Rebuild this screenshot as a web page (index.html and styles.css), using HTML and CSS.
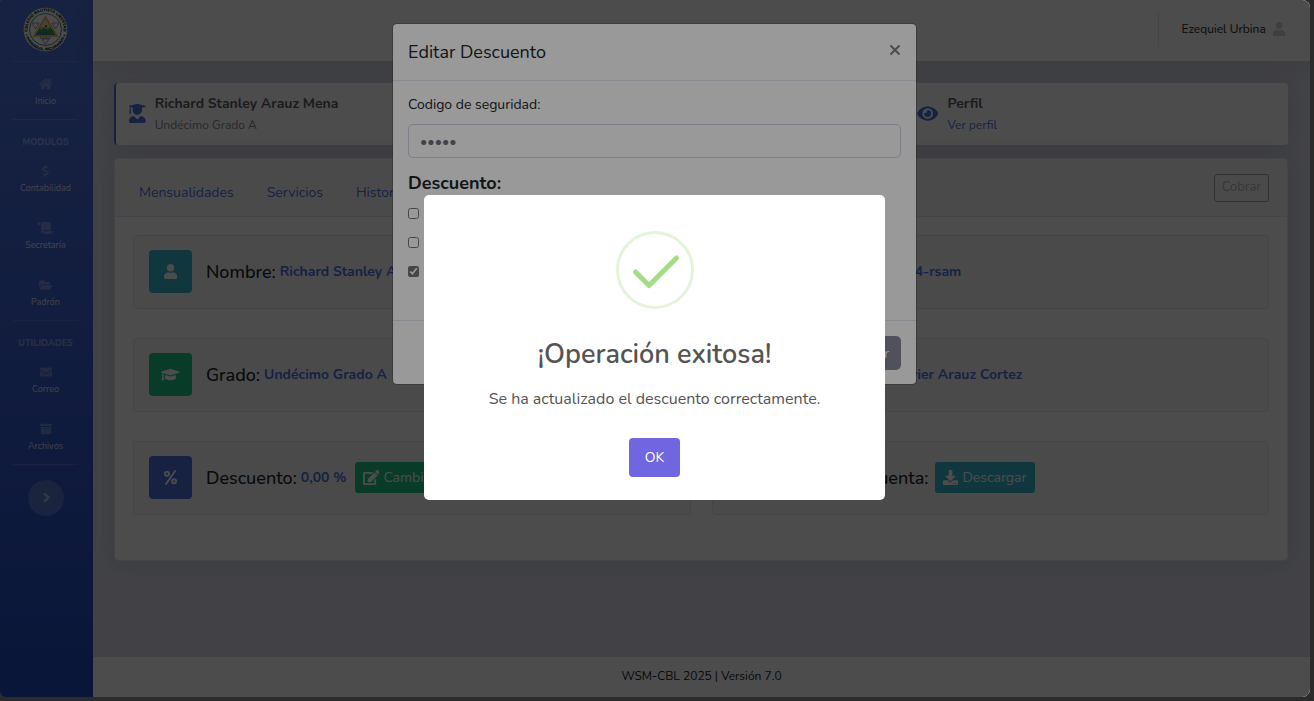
FILE: index.html
```html
<!DOCTYPE html>
<html lang="es">
<head>
<meta charset="utf-8">
<meta name="viewport" content="width=device-width, initial-scale=1">
<title>WSM-CBL</title>
<link rel="stylesheet" href="styles.css">
</head>
<body>
<div class="frame">
  <div class="app">
    <nav class="sidebar" aria-label="Principal">
      <a class="brand" href="#" aria-label="Colegio">
        <svg class="logo" viewBox="0 0 90 90">
          <defs>
            <path id="arc-top" d="M10 53 A36 36 0 1 1 80 53"/>
            <path id="arc-bottom" d="M4 46 A41 41 0 0 0 86 46"/>
            <clipPath id="tri"><path d="M45 22L66 57H24Z"/></clipPath>
          </defs>
          <circle cx="45" cy="45" r="44" fill="#fff" stroke="#3d8a7c" stroke-width="1"/>
          <circle cx="45" cy="45" r="32" fill="#fff" stroke="#3d8a7c" stroke-width="2"/>
          <text class="logo-text"><textPath href="#arc-top" startOffset="50%" text-anchor="middle">COLEGIO BAUTISTA LIBERTAD</textPath></text>
          <text class="logo-text"><textPath href="#arc-bottom" startOffset="50%" text-anchor="middle">• MANAGUA, NICARAGUA •</textPath></text>
          <path d="M18 32h14l-7 12zM58 32h14l-7 12zM38 64h14l-7 11z" fill="#fff" stroke="#444" stroke-width="1"/>
          <path d="M34 62h22" stroke="#444" stroke-width="2" stroke-dasharray="2 1"/>
          <g clip-path="url(#tri)">
            <rect x="20" y="18" width="50" height="42" fill="#79bfe0"/>
            <path d="M45 24l10 16H35z" fill="#f2e3a0"/>
            <path d="M22 50l10-7 5 3 6-5 6 5 6-4 12 9v8H22z" fill="#3f9a3a"/>
            <path d="M22 53q11-4 23 0t23 0v6H22z" fill="#2f78c4"/>
            <path d="M44 36h4v4h-4z" fill="#c33"/>
          </g>
          <path d="M45 20L68 58H22Z" fill="none" stroke="#e3b53c" stroke-width="3"/>
        </svg>
      </a>
      <hr>
      <a class="nav-item" href="#"><svg viewBox="0 0 576 512"><path d="M280.37 148.26L96 300.11V464a16 16 0 0 0 16 16l112.060-.29a16 16 0 0 0 15.920-16V368a16 16 0 0 1 16-16h64a16 16 0 0 1 16 16v95.640a16 16 0 0 0 16 16.050L464 480a16 16 0 0 0 16-16V300L295.670 148.260a12.190 12.190 0 0 0-15.300 0zM571.600 251.470L488 182.560V44.050a12 12 0 0 0-12-12h-56a12 12 0 0 0-12 12v72.610L318.470 43a48 48 0 0 0-61 0L4.340 251.470a12 12 0 0 0-1.600 16.900l25.500 31A12 12 0 0 0 45.150 301l235.220-193.740a12.190 12.190 0 0 1 15.300 0L530.900 301a12 12 0 0 0 16.900-1.600l25.500-31a12 12 0 0 0-1.700-16.930z"/></svg><span>Inicio</span></a>
      <hr>
      <div class="nav-heading">MODULOS</div>
      <a class="nav-item" href="#"><svg viewBox="0 0 288 512"><path d="M209.200 233.400l-108-31.600C88.700 198.200 80 186.500 80 173.500c0-16.300 13.200-29.500 29.500-29.500h66.300c12.200 0 24.200 3.700 34.200 10.500 6.100 4.100 14.300 3.100 19.500-2l34.800-34c7.100-6.900 6.100-18.400-1.800-24.500C238 74.800 207.400 64.100 176 64V16c0-8.800-7.200-16-16-16h-32c-8.800 0-16 7.200-16 16v48h-2.500C45.800 64-5.400 118.700.5 183.600c4.200 46.100 39.400 83.600 83.800 96.600l102.500 30c12.500 3.700 21.200 15.300 21.200 28.300 0 16.300-13.200 29.500-29.500 29.500h-66.300C100 368 88 364.300 78 357.500c-6.100-4.100-14.300-3.100-19.500 2l-34.800 34c-7.100 6.900-6.100 18.400 1.800 24.500 24.500 19.200 55.100 29.900 86.500 30v48c0 8.800 7.200 16 16 16h32c8.800 0 16-7.200 16-16v-48.200c46.600-.9 90.300-28.600 105.700-72.700 21.500-61.600-14.600-124.800-72.500-141.700z"/></svg><span>Contabilidad</span></a>
      <a class="nav-item" href="#"><svg viewBox="0 0 640 512"><path d="M48 0C21.530 0 0 21.530 0 48v64c0 8.840 7.160 16 16 16h80V48C96 21.530 74.470 0 48 0zm208 412.570V352h288V96c0-52.940-43.060-96-96-96H111.590C121.740 13.410 128 29.920 128 48v368c0 38.870 34.650 69.650 74.750 63.120C234.220 474 256 444.460 256 412.570zM288 384v32c0 52.930-43.060 96-96 96h336c61.860 0 112-50.140 112-112 0-8.840-7.160-16-16-16H288z"/></svg><span>Secretaría</span></a>
      <a class="nav-item" href="#"><svg viewBox="0 0 576 512"><path d="M572.694 292.093L500.270 416.248A63.997 63.997 0 0 1 444.989 448H45.025c-18.523 0-30.064-20.093-20.731-36.093l72.424-124.155A64 64 0 0 1 152 256h399.964c18.523 0 30.064 20.093 20.730 36.093zM152 224h328v-48c0-26.510-21.490-48-48-48H272l-64-64H48C21.490 64 0 85.490 0 112v278.046l69.077-118.418C86.214 242.250 117.989 224 152 224z"/></svg><span>Padrón</span></a>
      <hr>
      <div class="nav-heading">UTILIDADES</div>
      <a class="nav-item" href="#"><svg viewBox="0 0 512 512"><path d="M502.300 190.800c3.900-3.100 9.700-.2 9.700 4.700V400c0 26.500-21.500 48-48 48H48c-26.500 0-48-21.500-48-48V195.600c0-5 5.700-7.800 9.700-4.700 22.400 17.400 52.100 39.500 154.100 113.600 21.100 15.400 56.700 47.800 92.200 47.600 35.700.3 72-32.800 92.300-47.600 102-74.100 131.600-96.300 154-113.700zM256 320c23.200.4 56.600-29.200 73.400-41.400 132.700-96.300 142.800-104.700 173.400-128.700 5.800-4.500 9.200-11.500 9.200-18.900v-19c0-26.500-21.500-48-48-48H48c-26.500 0-48 21.500-48 48v19c0 7.400 3.400 14.300 9.200 18.900 30.600 23.900 40.700 32.400 173.400 128.700 16.800 12.200 50.200 41.800 73.400 41.400z"/></svg><span>Correo</span></a>
      <a class="nav-item" href="#"><svg viewBox="0 0 512 512"><path d="M32 448c0 17.700 14.300 32 32 32h384c17.700 0 32-14.300 32-32V160H32v288zm160-212c0-6.600 5.400-12 12-12h104c6.600 0 12 5.400 12 12v8c0 6.600-5.400 12-12 12H204c-6.600 0-12-5.400-12-12v-8zM480 32H32C14.300 32 0 46.300 0 64v48c0 8.800 7.200 16 16 16h480c8.800 0 16-7.200 16-16V64c0-17.700-14.300-32-32-32z"/></svg><span>Archivos</span></a>
      <hr>
      <button class="toggle" type="button" aria-label="Expandir menú"><svg viewBox="0 0 256 512"><path d="M224.300 273l-136 136c-9.400 9.400-24.600 9.400-33.900 0l-22.600-22.600c-9.400-9.400-9.400-24.600 0-33.900l96.400-96.400-96.400-96.400c-9.400-9.400-9.400-24.600 0-33.900L54.300 103c9.400-9.400 24.600-9.400 33.900 0l136 136c9.500 9.400 9.500 24.600.1 34z"/></svg></button>
    </nav>

    <div class="content">
      <header class="topbar">
        <a class="user" href="#"><span>Ezequiel Urbina</span>
          <svg viewBox="0 0 448 512"><path d="M224 256c70.700 0 128-57.300 128-128S294.700 0 224 0 96 57.300 96 128s57.300 128 128 128zm89.600 32h-16.700c-22.200 10.200-46.900 16-72.900 16s-50.600-5.800-72.900-16h-16.700C60.200 288 0 348.200 0 422.400V464c0 26.500 21.500 48 48 48h352c26.500 0 48-21.500 48-48v-41.600c0-74.200-60.200-134.400-134.400-134.400z"/></svg></a>
      </header>

      <main class="main">
        <section class="student">
          <div class="student-part">
            <svg viewBox="0 0 448 512"><path d="M319.400 320.600L224 416l-95.400-95.400C57.100 323.700 0 382.200 0 454.400v9.600c0 26.500 21.500 48 48 48h352c26.500 0 48-21.500 48-48v-9.600c0-72.200-57.100-130.700-128.600-133.800zM13.600 79.800l6.400 1.500v58.400c-7 4.200-12 11.500-12 20.300 0 8.400 4.600 15.400 11.100 19.700L3.500 242c-1.700 6.900 2.100 14 7.600 14h41.800c5.500 0 9.300-7.100 7.600-14l-15.600-62.300C51.400 175.400 56 168.400 56 160c0-8.800-5-16.100-12-20.300V87.100l66 15.900c-8.600 17.200-14 36.400-14 57 0 70.700 57.300 128 128 128s128-57.300 128-128c0-20.600-5.300-39.800-14-57l96.300-23.200c18.200-4.400 18.200-27.100 0-31.500l-190.400-46c-13-3.100-26.700-3.100-39.700 0L13.600 48.200c-18.100 4.400-18.100 27.200 0 31.600z"/></svg>
            <div><h2>Richard Stanley Arauz Mena</h2><p>Undécimo Grado A</p></div>
          </div>
          <div class="student-part">
            <svg viewBox="0 0 576 512"><path d="M572.520 241.400C518.290 135.590 410.930 64 288 64S57.680 135.640 3.480 241.410a32.350 32.350 0 0 0 0 29.190C57.710 376.410 165.070 448 288 448s230.320-71.640 284.520-177.410a32.350 32.350 0 0 0 0-29.190zM288 400a144 144 0 1 1 144-144 143.930 143.930 0 0 1-144 144zm0-240a95.310 95.310 0 0 0-25.310 3.790 47.850 47.850 0 0 1-66.900 66.900A95.780 95.780 0 1 0 288 160z"/></svg>
            <div><h2>Perfil</h2><p><a href="#">Ver perfil</a></p></div>
          </div>
        </section>

        <section class="card">
          <div class="card-head">
            <div class="tabs"><a href="#">Mensualidades</a><a href="#">Servicios</a><a href="#">Historial</a></div>
            <button class="cobrar" type="button" disabled>Cobrar</button>
          </div>
          <div class="tiles">
            <div class="tile">
              <span class="badge info"><svg viewBox="0 0 448 512"><path d="M224 256c70.700 0 128-57.300 128-128S294.700 0 224 0 96 57.300 96 128s57.300 128 128 128zm89.600 32h-16.700c-22.200 10.200-46.900 16-72.900 16s-50.600-5.800-72.900-16h-16.700C60.200 288 0 348.200 0 422.400V464c0 26.500 21.500 48 48 48h352c26.500 0 48-21.500 48-48v-41.600c0-74.200-60.200-134.400-134.400-134.400z"/></svg></span>
              <span class="label">Nombre:</span><b>Richard Stanley Arauz Mena</b>
            </div>
            <div class="tile">
              <span class="badge info"></span>
              <span class="label">Código:</span><b>2022-0064-rsam</b>
            </div>
            <div class="tile">
              <span class="badge success"><svg viewBox="0 0 640 512"><path d="M622.340 153.200L343.400 67.500c-15.200-4.670-31.600-4.670-46.790 0L17.660 153.200c-23.540 7.230-23.540 38.360 0 45.590l48.630 14.940c-10.670 13.190-17.230 29.280-17.880 46.900C38.780 266.150 32 276.110 32 288c0 10.780 5.680 19.850 13.860 25.650L20.330 428.530C18.110 438.520 25.710 448 35.940 448h56.110c10.240 0 17.840-9.480 15.620-19.470L82.140 313.650C90.320 307.850 96 298.780 96 288c0-11.570-6.470-21.250-15.660-26.870.76-15.020 8.440-28.300 20.690-36.720L296.600 284.500c9.060 2.780 26.440 6.250 46.790 0l278.950-85.700c23.550-7.240 23.550-38.360 0-45.600zM352.790 315.090c-28.530 8.760-52.840 3.920-65.590 0l-145.020-44.550L128 384c0 35.350 85.960 64 192 64s192-28.650 192-64l-14.180-113.470-145.030 44.560z"/></svg></span>
              <span class="label">Grado:</span><b>Undécimo Grado A</b>
            </div>
            <div class="tile">
              <span class="badge success"></span>
              <span class="label">Tutor:</span><b>Santiago Javier Arauz Cortez</b>
            </div>
            <div class="tile">
              <span class="badge primary"><svg viewBox="0 0 14 16"><g fill="none" stroke="#fff" stroke-width="2"><circle cx="3.200" cy="4" r="2.200"/><circle cx="10.800" cy="12" r="2.200"/><path d="M11.800 1L2.200 15" stroke-linecap="round"/></g></svg></span>
              <span class="label">Descuento:</span><b>0,00 %</b>
              <button class="btn success" type="button"><svg viewBox="0 0 576 512"><path d="M402.600 83.200l90.200 90.200c3.800 3.800 3.800 10 0 13.800L274.400 405.600l-92.800 10.300c-12.400 1.400-22.900-9.100-21.500-21.500l10.300-92.800L388.800 83.200c3.800-3.800 10-3.800 13.800 0zm162-22.900l-48.800-48.800c-15.200-15.200-39.900-15.200-55.200 0l-35.400 35.400c-3.800 3.800-3.800 10 0 13.800l90.200 90.200c3.800 3.800 10 3.800 13.800 0l35.400-35.400c15.200-15.300 15.200-40 0-55.200zM384 346.200V448H64V128h229.800c3.200 0 6.200-1.300 8.500-3.500l40-40c7.600-7.600 2.200-20.500-8.500-20.500H48C21.500 64 0 85.500 0 112v352c0 26.500 21.500 48 48 48h352c26.500 0 48-21.500 48-48V306.200c0-10.700-12.900-16-20.500-8.500l-40 40c-2.200 2.300-3.500 5.300-3.500 8.500z"/></svg>Cambiar</button>
            </div>
            <div class="tile">
              <span class="badge primary"></span>
              <span class="label">Estado de cuenta:</span>
              <button class="btn info" type="button"><svg viewBox="0 0 512 512"><path d="M216 0h80c13.300 0 24 10.700 24 24v168h87.700c17.800 0 26.700 21.500 14.100 34.100L269.700 378.300c-7.500 7.500-19.800 7.500-27.300 0L90.100 226.100c-12.600-12.600-3.700-34.100 14.100-34.100H192V24c0-13.300 10.700-24 24-24zm296 376v112c0 13.300-10.700 24-24 24H24c-13.300 0-24-10.700-24-24V376c0-13.300 10.700-24 24-24h146.700l49 49c20.100 20.100 52.500 20.100 72.600 0l49-49H488c13.300 0 24 10.700 24 24zm-124 88c0-11-9-20-20-20s-20 9-20 20 9 20 20 20 20-9 20-20zm64 0c0-11-9-20-20-20s-20 9-20 20 9 20 20 20 20-9 20-20z"/></svg>Descargar</button>
            </div>
          </div>
        </section>
      </main>
      <footer class="footer">WSM-CBL 2025 | Versión 7.0</footer>
    </div>
  </div>

  <div class="overlay modal-layer">
    <form class="modal" role="dialog" aria-labelledby="modal-title">
      <div class="modal-head"><h1 id="modal-title">Editar Descuento</h1><button class="close" type="button" aria-label="Cerrar"><svg viewBox="0 0 12 12"><path d="M1.500 1.500l9 9M10.500 1.500l-9 9"/></svg></button></div>
      <div class="modal-body">
        <label class="field-label" for="code">Codigo de seguridad:</label>
        <input class="field" id="code" type="password" value="12345">
        <h3>Descuento:</h3>
        <label class="check"><input type="checkbox">Media beca</label>
        <label class="check"><input type="checkbox">Beca completa</label>
        <label class="check"><input type="checkbox" checked>Sin descuento</label>
      </div>
      <div class="modal-foot"><button class="cancel" type="button">Cerrar</button></div>
    </form>
  </div>

  <div class="overlay alert-layer">
    <div class="alert" role="alertdialog" aria-labelledby="alert-title" aria-describedby="alert-text">
      <svg class="ok-icon" viewBox="0 0 78 78"><circle cx="39" cy="39" r="37.500"/><path d="M19.500 41L33 54.500L60.500 27"/></svg>
      <h2 id="alert-title">¡Operación exitosa!</h2>
      <p id="alert-text">Se ha actualizado el descuento correctamente.</p>
      <button type="button">OK</button>
    </div>
  </div>
</div>
</body>
</html>
```
FILE: styles.css
```css
* { box-sizing: border-box; }

body {
  margin: 0;
  background: #2b2b2b;
  color: #212529;
  font-family: Nunito, Lato, "Open Sans", sans-serif;
  font-size: 14px;
}

h1, h2, h3, p { margin: 0; }
a { color: #4e73df; text-decoration: none; }
button, input { font-family: inherit; }
svg { display: block; fill: currentColor; }

.frame {
  position: relative;
  min-height: calc(100vh - 4px);
  margin: 0 4px 4px 0;
  border-radius: 2px 8px 8px 6px;
  overflow: hidden;
}

.app { display: flex; min-height: calc(100vh - 4px); }

.overlay {
  position: absolute;
  inset: 0;
  display: flex;
  justify-content: center;
}
.modal-layer { background: rgba(0, 0, 0, .5); align-items: flex-start; padding: 23px 1px 0 0; }
.alert-layer { background: rgba(0, 0, 0, .4); align-items: center; padding: 0 1px 2px 0; }

/* Sidebar */
.sidebar {
  display: flex;
  flex-direction: column;
  align-items: center;
  flex: none;
  width: 93px;
  padding-right: 2px;
  background: linear-gradient(180deg, #4e73df 10%, #224abe 100%);
}
.sidebar hr {
  width: 65px;
  margin: 0;
  border: 0;
  border-top: 1px solid rgba(255, 255, 255, .15);
}
.brand { padding: 7px 0 9px; }
.logo { width: 45px; height: 45px; }
.logo-text { font-size: 8px; font-weight: 900; fill: #111; }
.nav-item {
  display: flex;
  flex-direction: column;
  align-items: center;
  gap: 5px;
  height: 57px;
  padding-top: 16px;
  color: rgba(255, 255, 255, .8);
  font-size: 9px;
  line-height: 12px;
}
.nav-item svg { height: 12px; color: rgba(255, 255, 255, .3); }
.nav-heading {
  height: 29px;
  padding-top: 16px;
  color: rgba(255, 255, 255, .4);
  font-size: 9px;
  font-weight: 800;
  line-height: 13px;
}
.toggle {
  display: grid;
  place-items: center;
  width: 36px;
  height: 36px;
  margin-top: 15px;
  padding: 0 0 2px 2px;
  border: 0;
  border-radius: 50%;
  background: rgba(255, 255, 255, .2);
  color: rgba(255, 255, 255, .5);
}
.toggle svg { height: 15px; }

/* Content */
.content { display: flex; flex-direction: column; flex: 1; min-width: 0; background: #dddfeb; }
.topbar {
  display: flex;
  justify-content: flex-end;
  align-items: flex-start;
  height: 61px;
  padding: 12px 25px 0 0;
  background: #fff;
  box-shadow: 0 2px 25px rgba(58, 59, 69, .15);
}
.user {
  display: flex;
  align-items: center;
  gap: 7px;
  height: 35px;
  padding: 0 0 1px 22px;
  border-left: 1px solid #e3e6f0;
  color: #212529;
  font-size: 12px;
}
.user svg { height: 14px; color: #d1d3e2; }
.main { flex: 1; padding: 22px 22px 0 21px; }

.student {
  display: grid;
  grid-template-columns: 68% 32%;
  align-items: center;
  height: 62px;
  padding-left: 13px;
  border-left: 2px solid #4e73df;
  border-radius: 4px;
  background: #fff;
  box-shadow: 0 2px 25px rgba(58, 59, 69, .15);
}
.student-part { display: flex; align-items: center; gap: 9px; color: #4e73df; }
.student h2 { color: #5a5c69; font-size: 14px; font-weight: 700; line-height: 22px; }
.student p { color: #858796; font-size: 12px; line-height: 21px; }
.student-part svg { height: 19px; margin-bottom: 2px; }

.card {
  margin-top: 13px;
  min-height: 403px;
  border: 1px solid #e3e6f0;
  border-radius: 5px;
  background: #fff;
  box-shadow: 0 2px 25px rgba(58, 59, 69, .15);
}
.card-head {
  display: flex;
  justify-content: space-between;
  align-items: flex-start;
  height: 58px;
  padding: 15px 18px 0 24px;
  border-bottom: 1px solid #e3e6f0;
  background: #f8f9fc;
  border-radius: 5px 5px 0 0;
}
.tabs { display: flex; gap: 33px; padding-top: 8px; line-height: 22px; }
.cobrar {
  height: 28px;
  padding: 0 7px 2px;
  border: 1px solid #a0a1a8;
  border-radius: 3px;
  background: transparent;
  color: #b8b9c0;
  font-size: 13px;
}
.tiles {
  display: grid;
  grid-template-columns: 1fr 1fr;
  gap: 29px 21px;
  padding: 18px;
}
.tile {
  display: flex;
  align-items: center;
  height: 74px;
  padding: 0 15px 1px;
  border: 1px solid #e3e6f0;
  border-radius: 4px;
  background: #f8f9fc;
  white-space: nowrap;
}
.badge {
  display: grid;
  place-items: center;
  width: 43px;
  height: 43px;
  margin-right: 14px;
  border-radius: 4px;
  color: #fff;
}
.badge svg { height: 15px; }
.info { background: #36b9cc; }
.success { background: #1cc88a; }
.primary { background: #4e73df; }
.label { margin-right: 4px; font-size: 18px; font-weight: 500; }
.tile b { color: #4e73df; font-size: 14px; }
.btn {
  display: flex;
  align-items: center;
  gap: 4px;
  height: 31px;
  margin-left: 8px;
  padding: 0 9px 0 8px;
  border: 0;
  border-radius: 3px;
  color: #fff;
  font-size: 14px;
}
.label + .btn { margin-left: 3px; }
.btn svg { height: 15px; }
.footer {
  height: 40px;
  background: #fff;
  font-size: 12px;
  line-height: 38px;
  text-align: center;
}

/* Dialog */
.modal {
  width: 525px;
  max-width: 100%;
  border: 1px solid rgba(0, 0, 0, .2);
  border-radius: 5px;
  background: #fff;
  background-clip: padding-box;
}
.modal-head {
  display: flex;
  justify-content: space-between;
  align-items: center;
  height: 57px;
  padding: 0 15px;
  border-bottom: 1px solid #e3e6f0;
}
.modal-head h1 { font-size: 18px; font-weight: 400; }
.close { padding: 0 0 4px; border: 0; background: none; color: #7f7f7f; }
.close svg { width: 12px; fill: none; stroke: currentColor; stroke-width: 2; }
.modal-body { display: flex; flex-direction: column; height: 239px; padding: 13px 15px; }
.field-label { line-height: 22px; }
.field {
  height: 34px;
  margin: 8px 0 14px;
  padding: 0 11px;
  border: 1px solid #d1d3e2;
  border-radius: 5px;
  background: #fff;
  color: #6e707e;
  font-size: 14px;
}
.modal h3 { margin-bottom: 9px; font-size: 18px; font-weight: 700; line-height: 22px; }
.check { display: flex; align-items: center; gap: 6px; height: 20px; margin-bottom: 9px; }
.check input { width: 11px; height: 11px; margin: 0; accent-color: #757575; }
.modal-foot {
  display: flex;
  justify-content: flex-end;
  padding: 15px 15px 14px;
  border-top: 1px solid #e3e6f0;
}
.cancel {
  height: 34px;
  padding: 0 12px;
  border: 0;
  border-radius: 5px;
  background: #858796;
  color: #fff;
  font-size: 14px;
}

/* Alert */
.alert {
  display: flex;
  flex-direction: column;
  align-items: center;
  width: 461px;
  max-width: 100%;
  padding: 36px 18px 23px;
  border-radius: 5px;
  background: #fff;
  color: #545454;
}
.ok-icon { width: 78px; fill: none; stroke-width: 3; }
.ok-icon circle { stroke: #e4f4db; }
.ok-icon path { stroke: #a5dc86; stroke-width: 5; stroke-linecap: round; stroke-linejoin: round; }
.alert h2 { margin-top: 28px; font-size: 27px; font-weight: 600; line-height: 36px; }
.alert p { margin-top: 15px; font-size: 16px; line-height: 22px; }
.alert button {
  height: 39px;
  margin-top: 28px;
  padding: 0 16px;
  border: 0;
  border-radius: 4px;
  background: #7066e0;
  color: #fff;
  font-size: 14px;
}
```
